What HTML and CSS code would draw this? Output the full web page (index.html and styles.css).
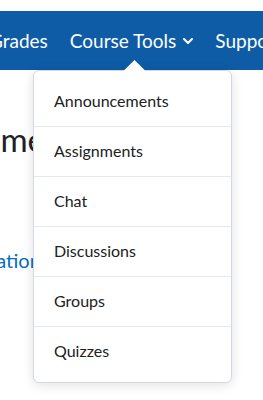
FILE: index.html
```html
<!DOCTYPE html>
<html lang="en">
<head>
    <meta charset="UTF-8">
    <meta name="viewport" content="width=device-width, initial-scale=1.0">
    <title>Course Tools</title>
    <link rel="stylesheet" href="styles.css">
</head>
<body>
    <div class="page">
        <nav class="navbar">
            <a class="nav-item first" href="#">Grades</a>
            <a class="nav-item open" href="#">Course Tools
                <svg class="chevron" width="10" height="6" viewBox="0 0 10 6"><path d="M1 1l4 4 4-4" fill="none" stroke="#fff" stroke-width="2" stroke-linecap="round" stroke-linejoin="round"/></svg>
            </a>
            <a class="nav-item" href="#">Support</a>
        </nav>

        <div class="content">
            <h1 class="page-title">Home</h1>
            <a class="link" href="#">Navigation</a>
        </div>

        <div class="dropdown">
            <ul>
                <li>Announcements</li>
                <li>Assignments</li>
                <li>Chat</li>
                <li>Discussions</li>
                <li>Groups</li>
                <li>Quizzes</li>
            </ul>
        </div>
    </div>
</body>
</html>
```

FILE: styles.css
```css
body {
    margin: 0;
    font-family: Lato, "Noto Sans", sans-serif;
    background-color: #fff;
    color: #202122;
    overflow: hidden;
}
.page {
    position: relative;
    width: 263px;
    height: 400px;
    overflow: hidden;
}
.navbar {
    margin-top: 11px;
    height: 59px;
    background-color: #0e5ba6;
    display: flex;
    align-items: center;
    white-space: nowrap;
}
.nav-item {
    color: #fff;
    text-decoration: none;
    font-size: 19px;
    padding: 0 11px;
    display: flex;
    align-items: center;
    gap: 7px;
}
.nav-item.first {
    margin-left: -11px;
    padding-left: 0;
}
.chevron {
    margin-top: 1px;
}
.content {
    padding-top: 49px;
}
.page-title {
    margin: 0;
    font-size: 33px;
    font-weight: normal;
    line-height: 40px;
    text-indent: -43px;
    white-space: nowrap;
}
.link {
    display: block;
    margin-top: 89px;
    font-size: 20px;
    color: #006fbf;
    text-decoration: none;
    text-indent: -54px;
    white-space: nowrap;
}
.dropdown {
    position: absolute;
    left: 33px;
    top: 70px;
    width: 197px;
    background-color: #fff;
    border: 1px solid #d3d9e3;
    border-radius: 6px;
    box-shadow: 0 2px 12px rgba(0, 0, 0, 0.12);
    padding: 6px 0;
}
.dropdown::before {
    content: "";
    position: absolute;
    left: 93px;
    top: -8px;
    width: 15px;
    height: 15px;
    background-color: #fff;
    transform: rotate(45deg);
}
.dropdown ul {
    list-style: none;
    margin: 0;
    padding: 0;
    position: relative;
}
.dropdown li {
    height: 49px;
    line-height: 47px;
    padding-left: 20px;
    font-size: 16px;
    border-top: 1px solid #e3e9f1;
}
.dropdown li:first-child {
    border-top: none;
}
```
